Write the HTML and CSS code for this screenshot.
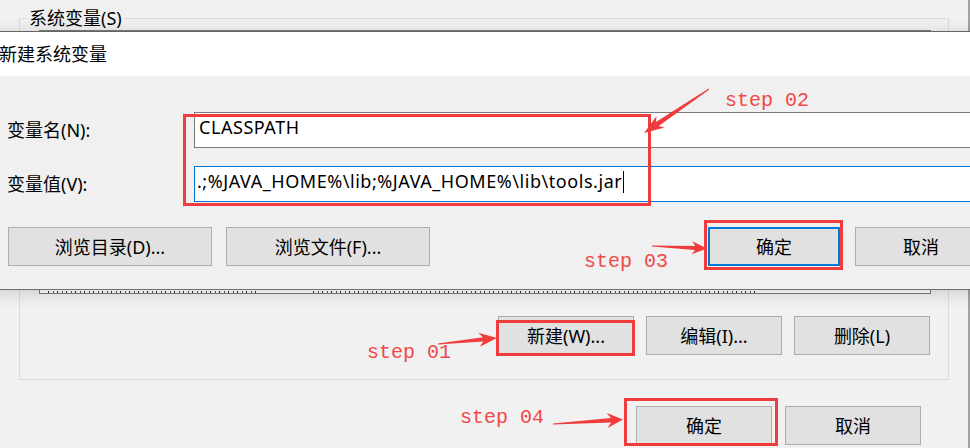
FILE: index.html
```html
<!DOCTYPE html>
<html lang="zh-CN">
<head>
<meta charset="utf-8">
<title>新建系统变量</title>
<link rel="stylesheet" href="styles.css">
</head>
<body>
<div class="back">
  <div class="group">
    <div class="legend">系统变量(S)</div>
    <div class="list">
      <div class="list-clip"><span class="dots d1"></span><span class="dots d2"></span></div>
    </div>
    <div class="group-actions">
      <div class="btn w136">新建(W)...</div>
      <div class="btn w136">编辑(I)...</div>
      <div class="btn w136">删除(L)</div>
    </div>
  </div>
  <div class="actions">
    <div class="btn w136">确定</div>
    <div class="btn w136">取消</div>
  </div>
</div>

<div class="dialog">
  <div class="title">新建系统变量</div>
  <div class="body">
    <div class="row">
      <div class="label">变量名(N):</div>
      <div class="input">CLASSPATH</div>
    </div>
    <div class="row">
      <div class="label">变量值(V):</div>
      <div class="input focus">.;%JAVA_HOME%\lib;%JAVA_HOME%\lib\tools.jar<span class="caret"></span></div>
    </div>
    <div class="dlg-actions">
      <div class="btn w204">浏览目录(D)...</div>
      <div class="btn w204">浏览文件(F)...</div>
      <div class="btn w132 primary">确定</div>
      <div class="btn w132">取消</div>
    </div>
  </div>
</div>

<div class="mark m02"></div>
<div class="mark m03"></div>
<div class="mark m01"></div>
<div class="mark m04"></div>

<div class="step s02">step 02</div>
<div class="step s03">step 03</div>
<div class="step s01">step 01</div>
<div class="step s04">step 04</div>

<svg class="arrows" width="970" height="448" viewBox="0 0 970 448">
  <polygon points="709.3,89.4 658.7,126.1 664.5,127.6 644,133 656.6,116 655.9,122 708.7,88.6"/>
  <polygon points="652,246.5 694.9,250 691.7,254.3 707,248.5 692.3,241.3 695.1,246 652,245.5"/>
  <polygon points="438,344.5 483.3,341.6 479.8,346.8 497,338 478.4,332.8 482.9,337.2 438,343.5"/>
  <polygon points="553,424.5 611.2,422.5 607.5,428 623,419.5 606.6,413 610.9,418.1 553,423.5"/>
</svg>
</body>
</html>
```

FILE: styles.css
```css
* { box-sizing: border-box; }

body {
  margin: 0;
  width: 970px;
  height: 448px;
  overflow: hidden;
  position: relative;
  background: #f1f1f1;
  font-family: "Noto Sans", "Noto Sans CJK SC", sans-serif;
  font-size: 18px;
  color: #000;
}

.back {
  width: 970px;
  height: 448px;
  border-right: 2px solid #a2a2a2;
  display: flex;
  flex-direction: column;
}

.group {
  margin: 18px 19px 0 19px;
  border: 1px solid #dcdcdc;
  padding-bottom: 24px;
}

.legend {
  display: block;
  width: fit-content;
  margin: -13px 0 0 8px;
  padding: 0 2px 0 1px;
  height: 24px;
  line-height: 24px;
  background: #f0f0f0;
}

.list {
  margin: 0 17px 0 19px;
  height: 264px;
  border: 1px solid #7a7a7a;
  background: #fff;
  display: flex;
  flex-direction: column;
  justify-content: flex-end;
}

.list-clip {
  height: 2px;
  display: flex;
}

.dots {
  height: 2px;
  background: repeating-linear-gradient(90deg, #2a2a2a 0 1px, transparent 1px 5px, #5a5a5a 5px 6px, transparent 6px 9px);
}
.d1 { margin-left: 8px; width: 209px; }
.d2 { margin-left: 56px; width: 442px; }

.group-actions {
  margin-top: 22px;
  padding-right: 18px;
  display: flex;
  justify-content: flex-end;
  gap: 12px;
}

.actions {
  margin-top: 26px;
  padding-right: 47px;
  display: flex;
  justify-content: flex-end;
  gap: 13px;
}

.btn {
  height: 39px;
  background: #e1e1e1;
  border: 1px solid #adadad;
  display: flex;
  align-items: center;
  justify-content: center;
  line-height: 24px;
  white-space: nowrap;
}
.w136 { width: 136px; }
.w204 { width: 204px; }
.w132 { width: 132px; }
.primary { border: 2px solid #0078d7; }

.dialog {
  position: absolute;
  top: 31px;
  left: -10px;
  width: 1010px;
  border-top: 1px solid #646464;
  border-bottom: 1px solid #6e6e6e;
  box-shadow: 0 3px 16px rgba(0, 0, 0, 0.16);
}

.title {
  height: 44px;
  line-height: 44px;
  padding-left: 9px;
  background: #fff;
}

.body {
  background: #f0f0f0;
  padding: 36px 13px 23px 17px;
  display: flex;
  flex-direction: column;
  gap: 18px;
}

.row {
  display: flex;
  align-items: center;
  height: 36px;
}

.label {
  width: 187px;
  line-height: 24px;
}

.input {
  flex: 1;
  height: 36px;
  background: #fff;
  border: 1px solid #7a7a7a;
  padding: 1px 0 0 4px;
  line-height: 26px;
  letter-spacing: 0.55px;
  white-space: nowrap;
}
.input.focus { border-color: #0078d7; padding-left: 2px; }

.caret {
  display: inline-block;
  width: 1px;
  height: 22px;
  background: #000;
  margin-left: 1px;
  vertical-align: -5px;
}

.dlg-actions {
  margin-top: 7px;
  padding-left: 1px;
  display: flex;
  gap: 14px;
}
.dlg-actions .primary { margin-left: auto; margin-right: 1px; }

.mark {
  position: absolute;
  border: 3px solid #f03c3c;
}
.m02 { left: 183px; top: 114px; width: 468px; height: 92px; }
.m03 { left: 704px; top: 220px; width: 139px; height: 50px; }
.m01 { left: 496px; top: 320px; width: 139px; height: 36px; }
.m04 { left: 624px; top: 398px; width: 154px; height: 48px; }

.step {
  position: absolute;
  font-family: "Liberation Mono", monospace;
  font-size: 20px;
  line-height: 20px;
  color: #f04848;
  white-space: nowrap;
}
.s02 { left: 725px; top: 91px; }
.s03 { left: 584px; top: 252px; }
.s01 { left: 367px; top: 343px; }
.s04 { left: 460px; top: 408px; }

.arrows {
  position: absolute;
  left: 0;
  top: 0;
  fill: #f03c3c;
}
```
